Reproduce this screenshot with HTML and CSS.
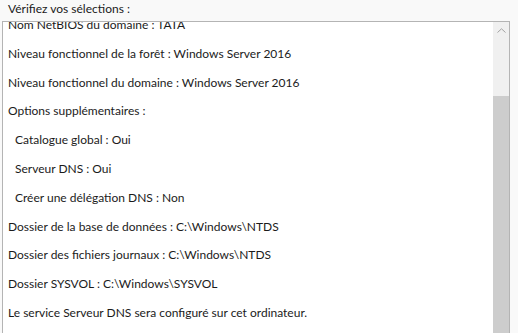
FILE: index.html
```html
<!DOCTYPE html>
<html lang="fr">
<head>
    <meta charset="UTF-8">
    <title>Vérifiez vos sélections</title>
    <link rel="stylesheet" href="styles.css">
</head>
<body>
    <div class="label">Vérifiez vos sélections :</div>

    <div class="review-box">
        <div class="review-view">
            <div class="review-list">
                <p>Nom NetBIOS du domaine : TATA</p>
                <p>Niveau fonctionnel de la forêt : Windows Server 2016</p>
                <p>Niveau fonctionnel du domaine : Windows Server 2016</p>
                <p>Options supplémentaires :</p>
                <p class="sub">Catalogue global : Oui</p>
                <p class="sub">Serveur DNS : Oui</p>
                <p class="sub">Créer une délégation DNS : Non</p>
                <p>Dossier de la base de données : C:\Windows\NTDS</p>
                <p>Dossier des fichiers journaux : C:\Windows\NTDS</p>
                <p>Dossier SYSVOL : C:\Windows\SYSVOL</p>
                <p>Le service Serveur DNS sera configuré sur cet ordinateur.</p>
            </div>
        </div>

        <!-- fake scrollbar -->
        <div class="scrollbar">
            <div class="scroll-arrow">
                <svg width="9" height="5" viewBox="0 0 9 5"><path d="M0.5 4.5 L4.5 0.8 L8.5 4.5" fill="none" stroke="#a3a3a3" stroke-width="1"/></svg>
            </div>
            <div class="scroll-track">
                <div class="scroll-thumb"></div>
            </div>
        </div>
    </div>
</body>
</html>
```

FILE: styles.css
```css
body {
    margin: 0;
    padding: 0;
    background: #f9f9f9;
    font-family: 'Lato', 'Open Sans', sans-serif;
    font-size: 12px;
    color: #1b1b1b;
    height: 333px;
    overflow: hidden;
}

.label {
    padding: 1px 0 0 8px;
    height: 20px;
    line-height: 16px;
}

.review-box {
    margin-left: 2px;
    width: 506px;
    height: 320px;
    border: 1px solid #b4b4b4;
    border-bottom: none;
    background: #fff;
    display: flex;
}

.review-view {
    flex: 1;
    overflow: hidden;
}

/* list is scrolled a little, first row is cut at the top */
.review-list {
    margin-top: -11px;
}

.review-list p {
    margin: 0;
    height: 28.8px;
    line-height: 28.8px;
    padding-left: 5px;
    white-space: nowrap;
}

.review-list .sub {
    padding-left: 12px;
}

.scrollbar {
    width: 16px;
    background: #f0f0f0;
    display: flex;
    flex-direction: column;
}

.scroll-arrow {
    height: 16px;
    display: flex;
    align-items: center;
    justify-content: center;
}

.scroll-track {
    flex: 1;
    padding-top: 58px;
}

.scroll-thumb {
    background: #cdcdcd;
    height: 100%;
}
```
